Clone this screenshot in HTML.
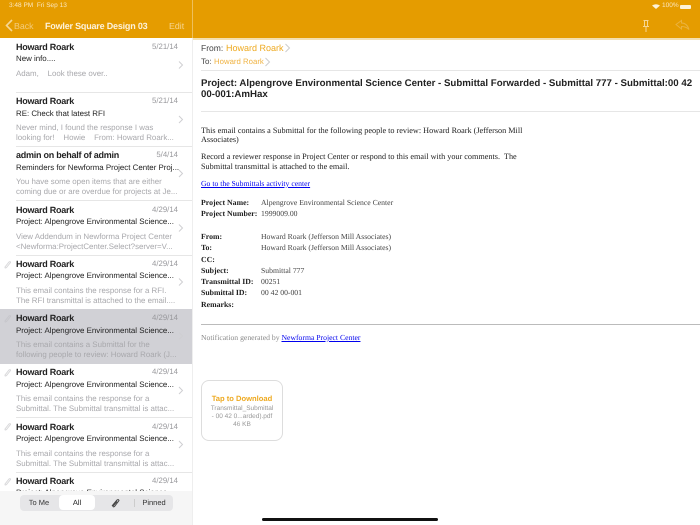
<!DOCTYPE html>
<html><head><meta charset="utf-8"><style>
html,body{margin:0;padding:0}
body{width:700px;height:525px;overflow:hidden;position:relative;background:#fff;font-family:"Liberation Sans",sans-serif;text-rendering:geometricPrecision;filter:blur(.3px)}
.t{position:absolute;white-space:nowrap;line-height:12px}
.hr{position:absolute;height:1px;background:#e6e6e6}
.n{font-size:9px;font-weight:bold;color:#222;letter-spacing:-.25px;left:16px}
.d{font-size:7.8px;color:#98989c;text-align:right;width:60px;left:118px}
.s{font-size:7.9px;color:#222;left:16px}
.p{font-size:7.9px;color:#a8a8ac;left:16px}
.sf{font-family:"Liberation Serif",serif;font-size:7.7px;color:#222;left:201px}
.l{font-size:8.2px}
.b{font-weight:bold;font-size:7.8px}
.g{color:#444;left:261px}
</style></head><body>
<div style="position:absolute;left:0;top:0;width:700px;height:38px;background:#e59c00"></div>
<div style="position:absolute;left:192px;top:0;width:1px;height:38px;background:#eebf5c"></div>
<div class="t" style="left:9px;top:0;font-size:6.5px;color:#fbe6bd">3:48 PM &nbsp;Fri Sep 13</div>
<svg style="position:absolute;left:4px;top:19px" width="10" height="13"><path d="M8 1L2.500 6.500L8 12" fill="none" stroke="#f6d694" stroke-width="1.6"/></svg>
<div class="t" style="left:14px;top:20px;font-size:8.8px;color:#f3cc7d">Back</div>
<div class="t" style="left:45px;top:20px;font-size:9px;letter-spacing:-.2px;color:#fdf2da;font-weight:bold">Fowler Square Design 03</div>
<div class="t" style="left:169px;top:20px;font-size:8.8px;color:#f6d694">Edit</div>
<svg style="position:absolute;left:652px;top:4px" width="8" height="5"><path d="M0 1.500Q4 -1 8 1.500L4 5Z" fill="#fdf2da"/></svg>
<div class="t" style="left:662px;top:0;font-size:6.500px;color:#fbe6bd">100%</div>
<div style="position:absolute;left:680px;top:5px;width:11px;height:4px;background:#fdf2da;border-radius:1px"></div>
<svg style="position:absolute;left:641px;top:19px" width="10" height="14"><path d="M2.500 1.500H7.500M3.500 1.500V7.500M6.500 1.500V7.500M2 7.500H8M5 7.500V13" fill="none" stroke="#f6d694" stroke-width="1"/></svg>
<svg style="position:absolute;left:675px;top:19px" width="16" height="12"><path d="M1 5.500L6.500 1.500V4Q12 4 14 10.500Q11 7.500 6.500 7.500V10Z" fill="none" stroke="#eab23f" stroke-width="1"/></svg>

<div class="t n" style="top:41px">Howard Roark</div><div class="t d" style="top:41px">5/21/14</div>
<div class="t s" style="top:53px">New info....</div>
<div class="t p" style="top:68px">Adam, &nbsp; &nbsp;Look these over..</div>
<div class="hr" style="left:16px;top:92px;width:176px"></div>

<div class="t n" style="top:95px">Howard Roark</div><div class="t d" style="top:95px">5/21/14</div>
<div class="t s" style="top:108px">RE: Check that latest RFI</div>
<div class="t p" style="top:122px">Never mind, I found the response I was</div>
<div class="t p" style="top:132px">looking for! &nbsp; &nbsp;Howie &nbsp; &nbsp;From: Howard Roark...</div>
<div class="hr" style="left:16px;top:146px;width:176px"></div>

<div class="t n" style="top:149px">admin on behalf of admin</div><div class="t d" style="top:149px">5/4/14</div>
<div class="t s" style="top:162px">Reminders for Newforma Project Center Proj...</div>
<div class="t p" style="top:176px">You have some open items that are either</div>
<div class="t p" style="top:186px">coming due or are overdue for projects at Je...</div>
<div class="hr" style="left:16px;top:200px;width:176px"></div>

<div class="t n" style="top:204px">Howard Roark</div><div class="t d" style="top:204px">4/29/14</div>
<div class="t s" style="top:216px">Project: Alpengrove Environmental Science...</div>
<div class="t p" style="top:231px">View Addendum in Newforma Project Center</div>
<div class="t p" style="top:241px">&lt;Newforma:ProjectCenter.Select?server=V...</div>
<div class="hr" style="left:16px;top:255px;width:176px"></div>

<div class="t n" style="top:258px">Howard Roark</div><div class="t d" style="top:258px">4/29/14</div>
<div class="t s" style="top:270px">Project: Alpengrove Environmental Science...</div>
<div class="t p" style="top:285px">This email contains the response for a RFI.</div>
<div class="t p" style="top:295px">The RFI transmittal is attached to the email....</div>

<div style="position:absolute;left:0;top:309px;width:192px;height:55px;background:#d1d1d6"></div>
<div class="t n" style="top:312px">Howard Roark</div><div class="t d" style="top:312px">4/29/14</div>
<div class="t s" style="top:325px">Project: Alpengrove Environmental Science...</div>
<div class="t p" style="top:339px">This email contains a Submittal for the</div>
<div class="t p" style="top:349px">following people to review: Howard Roark (J...</div>

<div class="t n" style="top:366px">Howard Roark</div><div class="t d" style="top:366px">4/29/14</div>
<div class="t s" style="top:379px">Project: Alpengrove Environmental Science...</div>
<div class="t p" style="top:393px">This email contains the response for a</div>
<div class="t p" style="top:403px">Submittal. The Submittal transmittal is attac...</div>
<div class="hr" style="left:16px;top:417px;width:176px"></div>

<div class="t n" style="top:421px">Howard Roark</div><div class="t d" style="top:421px">4/29/14</div>
<div class="t s" style="top:433px">Project: Alpengrove Environmental Science...</div>
<div class="t p" style="top:448px">This email contains the response for a</div>
<div class="t p" style="top:458px">Submittal. The Submittal transmittal is attac...</div>
<div class="hr" style="left:16px;top:472px;width:176px"></div>

<div class="t n" style="top:475px">Howard Roark</div><div class="t d" style="top:475px">4/29/14</div>
<div class="t s" style="top:487px">Project: Alpengrove Environmental Science...</div>

<svg style="position:absolute;left:0;top:0" width="192" height="525" fill="none" stroke="#cfcfd2" stroke-width="1">
<path d="M179 61.500L182.500 65L179 68.500M179 116L182.500 119.500L179 123M179 170L182.500 173.500L179 177M179 224.500L182.500 228L179 231.500M179 278.500L182.500 282L179 285.500M179 332.500L182.500 336L179 339.500M179 387L182.500 390.500L179 394M179 441L182.500 444.500L179 448"/>
<path stroke="#d8d8da" d="M5 267L9 262Q10.500 261 10.500 262.500L6.500 267.500Q5 268.500 5 267.500ZM5 375L9 370Q10.500 369 10.500 370.500L6.500 375.500Q5 376.500 5 375.500ZM5 429L9 424Q10.500 423 10.500 424.500L6.500 429.500Q5 430.500 5 429.500ZM5 484L9 479Q10.500 478 10.500 479.500L6.500 484.500Q5 485.500 5 484.500Z"/>
<path stroke="#c6c6cb" d="M5 321L9 316Q10.500 315 10.500 316.500L6.500 321.500Q5 322.500 5 321.500Z"/>
</svg>

<div style="position:absolute;left:0;top:491px;width:192px;height:34px;background:#f6f6f6"></div>
<div style="position:absolute;left:192px;top:38px;width:1px;height:487px;background:#eee"></div>
<div style="position:absolute;left:20px;top:495px;width:153px;height:16px;background:#e6e6e8;border-radius:4px"></div>
<div style="position:absolute;left:59px;top:495px;width:36px;height:15px;background:#fff;border-radius:4px"></div>
<div class="t" style="left:20px;top:497px;width:38px;text-align:center;font-size:7.500px;color:#333">To Me</div>
<div class="t" style="left:59px;top:497px;width:36px;text-align:center;font-size:7.500px;color:#222">All</div>
<svg style="position:absolute;left:110px;top:498px" width="11" height="11" fill="none" stroke="#444" stroke-width="1"><path d="M2 8L7 2Q8.500 1 9 2.500L4.500 8.500Q3 9.500 3 8L7 3.500"/></svg>
<div style="position:absolute;left:134px;top:499px;width:1px;height:8px;background:#ccc"></div>
<div class="t" style="left:135px;top:497px;width:38px;text-align:center;font-size:7.500px;color:#333">Pinned</div>

<div style="position:absolute;left:193px;top:38px;width:507px;height:2px;background:#f3dfb0"></div>
<div class="t" style="left:201px;top:42px;font-size:8.500px;color:#444">From:</div>
<div class="t" style="left:226px;top:42px;font-size:9px;color:#eea91f">Howard Roark</div>
<svg style="position:absolute;left:284px;top:43px" width="7" height="10"><path d="M1.500 1L5.500 5L1.500 9" fill="none" stroke="#ccc"/></svg>
<div class="t" style="left:201px;top:56px;font-size:8px;color:#444">To:</div>
<div class="t" style="left:214px;top:56px;font-size:7.800px;color:#f0b445">Howard Roark</div>
<svg style="position:absolute;left:264px;top:57px" width="7" height="10"><path d="M1.500 1L5.500 5L1.500 9" fill="none" stroke="#ccc"/></svg>
<div class="hr" style="left:201px;top:70px;width:499px"></div>
<div class="t" style="font-weight:bold;left:201px;top:78px;font-size:9.700px;color:#222">Project: Alpengrove Environmental Science Center - Submittal Forwarded - Submittal 777 - Submittal:00 42</div>
<div class="t" style="font-weight:bold;left:201px;top:89px;font-size:9.700px;color:#222">00-001:AmHax</div>
<div class="hr" style="left:201px;top:111px;width:499px"></div>

<div class="t sf l" style="top:125px">This email contains a Submittal for the following people to review: Howard Roark (Jefferson Mill</div>
<div class="t sf l" style="top:134px">Associates)</div>
<div class="t sf l" style="top:151px">Record a reviewer response in Project Center or respond to this email with your comments.&nbsp; The</div>
<div class="t sf l" style="top:161px">Submittal transmittal is attached to the email.</div>
<div class="t sf" style="top:178px;color:#0000ee;text-decoration:underline">Go to the Submittals activity center</div>

<div class="t sf b" style="top:197px">Project Name:</div><div class="t sf g" style="top:197px">Alpengrove Environmental Science Center</div>
<div class="t sf b" style="top:208px">Project Number:</div><div class="t sf g" style="top:208px">1999009.00</div>
<div class="t sf b" style="top:231px">From:</div><div class="t sf g" style="top:231px">Howard Roark (Jefferson Mill Associates)</div>
<div class="t sf b" style="top:242px">To:</div><div class="t sf g" style="top:242px">Howard Roark (Jefferson Mill Associates)</div>
<div class="t sf b" style="top:254px">CC:</div>
<div class="t sf b" style="top:265px">Subject:</div><div class="t sf g" style="top:265px">Submittal 777</div>
<div class="t sf b" style="top:276px">Transmittal ID:</div><div class="t sf g" style="top:276px">00251</div>
<div class="t sf b" style="top:287px">Submittal ID:</div><div class="t sf g" style="top:287px">00 42 00-001</div>
<div class="t sf b" style="top:299px">Remarks:</div>
<div style="position:absolute;left:201px;top:324px;width:499px;height:1px;background:#bbb"></div>
<div class="t sf" style="top:332px;color:#8a8a8a">Notification generated by <span style="color:#0000ee;text-decoration:underline">Newforma Project Center</span></div>

<div style="position:absolute;left:201px;top:380px;width:82px;height:61px;border:1px solid #ddd;border-radius:8px;box-sizing:border-box"></div>
<div class="t" style="left:201px;top:393px;width:82px;text-align:center;font-size:7.600px;font-weight:bold;color:#eea91f">Tap to Download</div>
<div class="t" style="left:201px;top:405px;width:82px;text-align:center;font-size:6.500px;color:#999;line-height:7.500px">Transmittal_Submittal<br>- 00 42 0...arded).pdf</div>
<div class="t" style="left:201px;top:420.500px;width:82px;text-align:center;font-size:6.500px;color:#999;line-height:8px">46 KB</div>

<div style="position:absolute;left:262px;top:518px;width:176px;height:3px;background:#111;border-radius:2px"></div>
</body></html>
